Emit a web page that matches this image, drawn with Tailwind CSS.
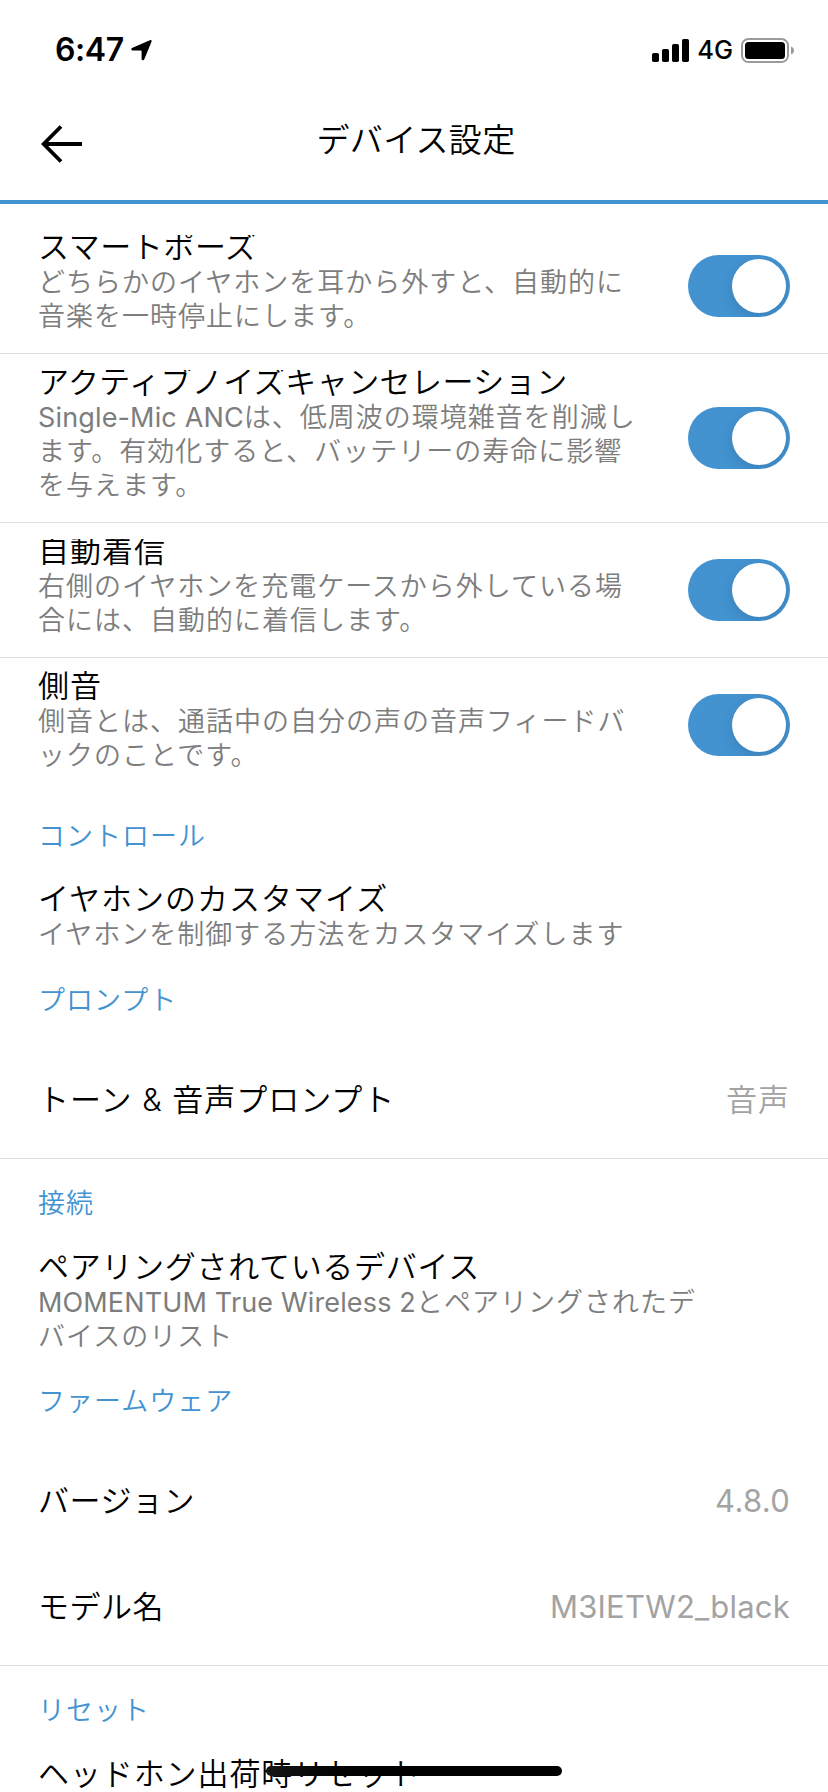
<!DOCTYPE html>
<html lang="ja">
<head>
  <meta charset="UTF-8" />
  <meta name="viewport" content="width=device-width, initial-scale=1.0" />
  <title>デバイス設定</title>
  <script src="https://cdn.jsdelivr.net/npm/@tailwindcss/browser@4"></script>
</head>
<body class="bg-white text-black font-['Inter','Noto_Sans_CJK_JP',sans-serif] font-[350] overflow-hidden">
  <div class="relative w-[828px] h-[1792px] overflow-hidden whitespace-nowrap">

    <!-- Status bar -->
    <div class="h-[100px] pl-[55px] pr-[33px] flex items-center justify-between">
      <div class="flex items-center">
        <span class="text-[32px] leading-none font-semibold tracking-[-0.4px]">6:47</span>
        <svg class="ml-[7px] w-[21px] h-[21px]" viewBox="0 0 21 21">
          <path d="M20.6 1.4 L13.2 19.4 Q12.2 21 10.6 19.6 V11.4 Q10.6 10.6 9.8 10.6 H1.4 Q-0.6 9.4 1 8 L18.8 0.2 Q21 -0.3 20.6 1.4Z" />
        </svg>
      </div>
      <div class="flex items-center">
        <svg class="w-[37px] h-[23px]" viewBox="0 0 37 23">
          <rect x="0" y="14" width="7" height="9" rx="1.7" />
          <rect x="10" y="10" width="7" height="13" rx="1.7" />
          <rect x="20" y="5" width="7" height="18" rx="1.7" />
          <rect x="30" y="0" width="7" height="23" rx="1.7" />
        </svg>
        <span class="ml-[8px] text-[25.5px] leading-none font-medium">4G</span>
        <svg class="ml-[8px] w-[54px] h-[25px]" viewBox="0 0 54 25">
          <rect x="1" y="1" width="46" height="23" rx="6.5" fill="none" stroke="#9b9b9b" stroke-width="2" />
          <rect x="4" y="4" width="40" height="17" rx="3.5" />
          <path d="M50 8.5 Q53 9.7 53 12.5 Q53 15.3 50 16.5Z" fill="#9b9b9b" />
        </svg>
      </div>
    </div>

    <!-- Header -->
    <header class="h-[104px] border-b-4 border-[#4393d1] px-[41px] flex items-start">
      <svg class="mt-[25px] w-[41px] h-[38px]" viewBox="0 0 41 38" fill="none" stroke="#000" stroke-width="3.8">
        <path d="M20 1.5 L2.7 19 L20 36.5 M2.7 19 H41" />
      </svg>
      <h1 class="flex-1 mt-[20px] ml-[4px] pr-[41px] text-center text-[33px] leading-[40px] tracking-[0.35px]">デバイス設定</h1>
    </header>

    <main class="pt-[15px] text-[27px] leading-[34px] tracking-[1px] text-[#7d7d7d]">
      <section class="h-[135px] pl-[38px] pr-[38px] border-b border-[#e0e0e0] flex items-center justify-between">
        <div class="self-start pt-[16px]">
          <h2 class="h-[31px] overflow-hidden text-[31px] leading-[24px] tracking-[0.6px] text-black">スマートポーズ</h2>
          <p>どちらかのイヤホンを耳から外すと、自動的に<br />音楽を一時停止にします。</p>
        </div>
        <div class="w-[102px] h-[62px] rounded-full bg-[#4393d1] p-[4px] flex justify-end overflow-hidden">
          <div class="w-[54px] h-[54px] rounded-full bg-white shadow-[0_4px_14px_rgba(0,0,0,0.13)]"></div>
        </div>
      </section>

      <section class="h-[169px] pl-[38px] pr-[38px] border-b border-[#e0e0e0] flex items-center justify-between">
        <div class="self-start pt-[16px]">
          <h2 class="h-[31px] overflow-hidden text-[31px] leading-[24px] tracking-[0.45px] text-black">アクティブノイズキャンセレーション</h2>
          <p><span class="font-normal tracking-[0.15px]">Single-Mic ANC</span>は、低周波の環境雑音を削減し<br />ます。有効化すると、バッテリーの寿命に影響<br />を与えます。</p>
        </div>
        <div class="w-[102px] h-[62px] rounded-full bg-[#4393d1] p-[4px] flex justify-end overflow-hidden">
          <div class="w-[54px] h-[54px] rounded-full bg-white shadow-[0_4px_14px_rgba(0,0,0,0.13)]"></div>
        </div>
      </section>

      <section class="h-[135px] pl-[38px] pr-[38px] border-b border-[#e0e0e0] flex items-center justify-between">
        <div class="self-start pt-[16px]">
          <h2 class="h-[31px] overflow-hidden text-[31px] leading-[24px] tracking-[1px] text-black">自動着信</h2>
          <p>右側のイヤホンを充電ケースから外している場<br />合には、自動的に着信します。</p>
        </div>
        <div class="w-[102px] h-[62px] rounded-full bg-[#4393d1] p-[4px] flex justify-end overflow-hidden">
          <div class="w-[54px] h-[54px] rounded-full bg-white shadow-[0_4px_14px_rgba(0,0,0,0.13)]"></div>
        </div>
      </section>

      <section class="h-[134px] pl-[38px] pr-[38px] flex items-center justify-between">
        <div class="self-start pt-[16px]">
          <h2 class="h-[31px] text-[31px] leading-[24px] tracking-[1px] text-black">側音</h2>
          <p>側音とは、通話中の自分の声の音声フィードバ<br />ックのことです。</p>
        </div>
        <div class="w-[102px] h-[62px] rounded-full bg-[#4393d1] p-[4px] flex justify-end overflow-hidden">
          <div class="w-[54px] h-[54px] rounded-full bg-white shadow-[0_4px_14px_rgba(0,0,0,0.13)]"></div>
        </div>
      </section>

      <!-- Controls -->
      <h3 class="h-[79px] pt-[28px] px-[38px] text-[#4393d1]">コントロール</h3>
      <section class="h-[80px] pt-[16px] px-[38px]">
        <h2 class="h-[31px] text-[31px] leading-[24px] tracking-[1px] text-black">イヤホンのカスタマイズ</h2>
        <p>イヤホンを制御する方法をカスタマイズします</p>
      </section>

      <!-- Prompts -->
      <h3 class="h-[91px] pt-[33px] px-[38px] text-[#4393d1]">プロンプト</h3>
      <section class="h-[117px] px-[38px] border-b border-[#e0e0e0] flex items-center justify-between text-[31px] tracking-[1px]">
        <h2 class="text-black">トーン &amp; 音声プロンプト</h2>
        <span class="text-[#a3a3a3]">音声</span>
      </section>

      <!-- Connection -->
      <h3 class="h-[80px] pt-[28px] px-[38px] text-[#4393d1]">接続</h3>
      <section class="h-[114px] pt-[16px] px-[38px]">
        <h2 class="h-[31px] text-[31px] leading-[24px] tracking-[0.7px] text-black">ペアリングされているデバイス</h2>
        <p><span class="font-normal tracking-[0.15px]">MOMENTUM True Wireless 2</span>とペアリングされたデ<br />バイスのリスト</p>
      </section>

      <!-- Firmware -->
      <h3 class="h-[95px] pt-[32px] px-[38px] text-[#4393d1]">ファームウェア</h3>
      <section class="h-[106px] px-[38px] flex items-center justify-between text-[31px] tracking-[0.5px]">
        <h2 class="text-black">バージョン</h2>
        <span class="text-[#a3a3a3] font-normal tracking-[0.3px]">4.8.0</span>
      </section>
      <section class="h-[112px] pb-[5px] px-[38px] border-b border-[#e0e0e0] flex items-center justify-between text-[31px] tracking-[0.5px]">
        <h2 class="text-black">モデル名</h2>
        <span class="text-[#a3a3a3] font-normal tracking-[0.2px]">M3IETW2_black</span>
      </section>

      <!-- Reset -->
      <h3 class="h-[80px] pt-[28px] px-[38px] text-[#4393d1]">リセット</h3>
      <section class="pt-[16px] px-[38px]">
        <h2 class="text-[31px] leading-[24px] tracking-[0.9px] text-black">ヘッドホン出荷時リセット</h2>
      </section>
    </main>

    <!-- Home indicator -->
    <div class="absolute left-[266px] top-[1766px] w-[296px] h-[10px] rounded-full bg-linear-to-r from-[#161616] to-black to-50%"></div>
  </div>
</body>
</html>
